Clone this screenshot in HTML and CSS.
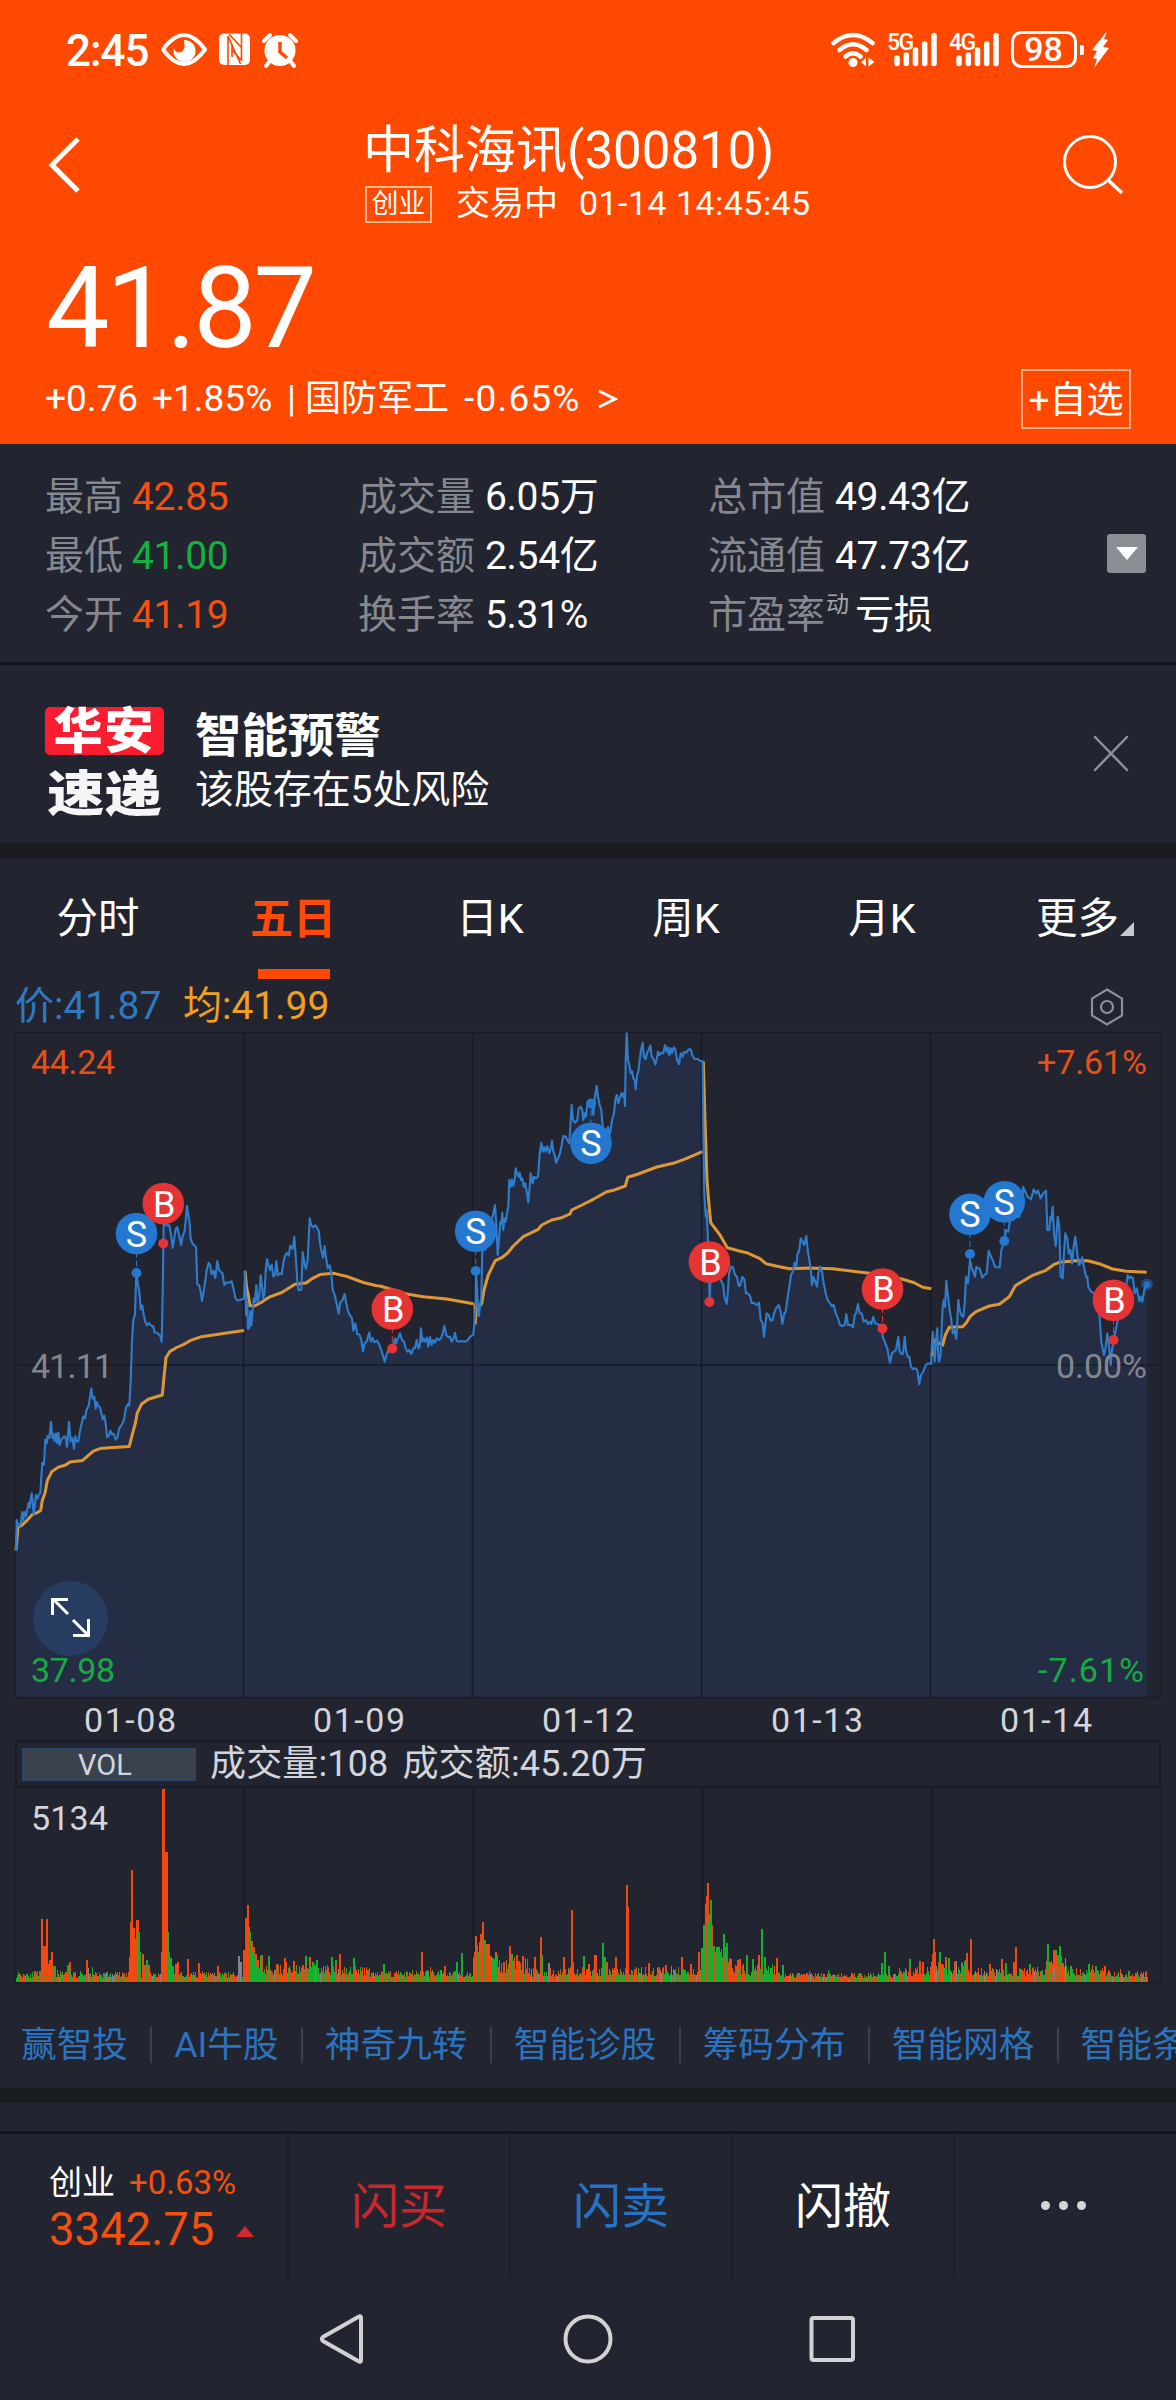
FILE: index.html
```html
<!DOCTYPE html>
<html lang="zh-CN">
<head>
<meta charset="utf-8">
<title>中科海讯(300810)</title>
<link rel="stylesheet" href="styles.css">
</head>
<body>
<div class="screen">
  <header class="top">
    <div class="status">
      <span class="clock">2:45</span>
      <svg class="status-left" width="140" height="38" viewBox="160 31 140 38">
        <path d="M163 49.500Q184 20.500 205 49.500Q184 78.500 163 49.500Z" fill="none" stroke="#fff" stroke-width="4" stroke-linejoin="round"/>
        <path d="M184 40a11 11 0 1 1-10 8q2 6 7 4t3-12z" fill="#fff"/>
        <rect x="219" y="33.500" width="31" height="31.500" rx="5" fill="#fff"/>
        <path d="M228 65V36L240.500 64M241.500 33V61M229 34L241 47M232 44V57M232 50L241 60" fill="none" stroke="#ff4800" stroke-width="1.600"/>
        <circle cx="280" cy="50.500" r="15.500" fill="#fff"/>
        <path d="M264 41l6-6M296 41l-6-6M269 62l-3 4M291 62l3 4" stroke="#fff" stroke-width="4" stroke-linecap="round"/>
        <path d="M280 42v10l7 6" fill="none" stroke="#ff4800" stroke-width="3.500"/>
      </svg>
      <svg class="status-right" width="282" height="40" viewBox="830 30 282 40">
        <g fill="none" stroke="#fff" stroke-width="4.500" stroke-linecap="round">
          <path d="M833.500 43Q853 27 872.500 43M839.500 50Q853 38.500 866.500 50M845.500 56.500Q853 50 860.500 56.500"/>
          <path d="M897 58v5.500M906.300 55v8.500M915.500 50v13.500M924.700 44v19.500M934 35.500v28M959 58v5.500M968.300 55v8.500M977.500 50v13.500M986.700 44v19.500M996 35.500v28" stroke-width="5.500"/>
        </g>
        <circle cx="853" cy="62.500" r="4.500" fill="#fff"/>
        <path d="M866 57.500v9l-5-4.500zM868.500 57.500l6 4.500-6 4.500z" fill="#fff"/>
        <text class="net" x="887" y="49.500">5G</text>
        <text class="net" x="949" y="49.500">4G</text>
        <rect x="1012.500" y="32.500" width="63" height="34" rx="9" fill="none" stroke="#fff" stroke-width="3"/>
        <text class="battery" x="1043.500" y="61">98</text>
        <path d="M1080 45h2.500q1.500 0 1.500 2v6q0 2-1.500 2h-2.500z" fill="#fff"/>
        <path d="M1107 31l-15 19 5 1-4 7 4 1-3 9 15-20-6-1 5-7-4-1z" fill="#fff"/>
      </svg>
    </div>
    <div class="titlebar">
      <svg class="back" width="34" height="60" viewBox="0 0 34 60"><path d="M32 4L6 30L32 56" fill="none" stroke="#fff" stroke-width="5"/></svg>
      <div class="title">
        <div class="name">中科海讯(300810)</div>
        <div class="session"><span class="board">创业</span><span class="state">交易中</span><span class="time">01-14 14:45:45</span></div>
      </div>
      <svg class="search" width="62" height="62" viewBox="0 0 62 62"><circle cx="28" cy="28" r="25.500" fill="none" stroke="#fff" stroke-width="3"/><path d="M46 46L60 59" stroke="#fff" stroke-width="3.500"/></svg>
    </div>
    <div class="price">41.87</div>
    <div class="change">
      <span class="c-abs">+0.76</span><span class="c-pct">+1.85%</span><span class="c-bar">|</span><span class="c-ind">国防军工</span><span class="c-ipct">-0.65%</span>
      <svg width="20" height="22" viewBox="0 0 20 22"><path d="M1 3L17 11L1 19" fill="none" stroke="#fff" stroke-width="3"/></svg>
      <span class="add">+自选</span>
    </div>
  </header>

  <section class="stats">
    <dl>
      <div><dt>最高</dt><dd class="up">42.85</dd></div>
      <div><dt>最低</dt><dd class="down">41.00</dd></div>
      <div><dt>今开</dt><dd class="up">41.19</dd></div>
    </dl>
    <dl>
      <div><dt>成交量</dt><dd>6.05万</dd></div>
      <div><dt>成交额</dt><dd>2.54亿</dd></div>
      <div><dt>换手率</dt><dd>5.31%</dd></div>
    </dl>
    <dl>
      <div><dt>总市值</dt><dd>49.43亿</dd></div>
      <div><dt>流通值</dt><dd>47.73亿</dd></div>
      <div><dt>市盈率<sup>动</sup></dt><dd>亏损</dd></div>
    </dl>
    <button class="expand"><svg width="22" height="13" viewBox="0 0 22 13"><path d="M0 0h22l-11 13z" fill="#fff"/></svg></button>
  </section>

  <section class="notice">
    <div class="logo"><span class="logo-a">华安</span><span class="logo-b">速递</span></div>
    <div class="notice-text"><strong>智能预警</strong><span>该股存在5处风险</span></div>
    <svg width="36" height="38" viewBox="0 0 36 38"><path d="M2 3L34 36M34 3L2 36" stroke="#8c9097" stroke-width="2.500" stroke-linecap="round"/></svg>
  </section>

  <nav class="tabs">
    <span>分时</span><span class="active">五日</span><span>日K</span><span>周K</span><span>月K</span><span class="more">更多<i></i></span>
  </nav>

  <div class="legend">
    <span class="l-price">价:41.87</span><span class="l-avg">均:41.99</span>
    <svg width="36" height="40" viewBox="0 0 36 40"><path d="M18 2.500L33 11.500V28.500L18 37.500L3 28.500V11.500Z" fill="none" stroke="#8c9097" stroke-width="2.200"/><circle cx="18" cy="20" r="6" fill="none" stroke="#8c9097" stroke-width="2.200"/></svg>
  </div>

  <svg class="chart" width="1176" height="710" viewBox="0 1030 1176 710">
    <path id="area" fill="#252d45"/>
    <g class="grid">
      <path d="M15.500 1697V1032.500H1160.500V1697M15 1365H1159M15 1697.500H1161"/>
      <path class="strong" d="M243.500 1032V1697M472.500 1032V1697M701.500 1032V1697M930.500 1032V1697"/>
    </g>
    <g id="average" fill="none" stroke="#dd9733" stroke-width="3" stroke-linejoin="round"></g>
    <path id="line" fill="none" stroke="#2f7ccb" stroke-width="2.100" stroke-linejoin="round"/>
    <circle cx="1147" cy="1284.500" r="6" fill="#2478d0" opacity=".4"/><circle cx="1147" cy="1284.500" r="3.500" fill="#2478d0" opacity=".8"/>
    <g id="markers"></g>
    <circle cx="70.500" cy="1618.500" r="37.500" fill="#263d61"/>
    <path d="M68 1614L53 1599M68 1599.500H52.500V1615M73 1620L88 1635M73 1635.500H88.500V1619" fill="none" stroke="#fff" stroke-width="3"/>
    <g class="axis">
      <text x="31" y="1074" class="t-up" textLength="84">44.24</text>
      <text x="31" y="1378" class="t-flat" textLength="82">41.11</text>
      <text x="31" y="1682" class="t-down" textLength="84">37.98</text>
      <text x="1037" y="1074" class="t-up" textLength="110">+7.61%</text>
      <text x="1056" y="1378" class="t-flat" textLength="91">0.00%</text>
      <text x="1038" y="1682" class="t-down" textLength="106">-7.61%</text>
      <text x="84" y="1732" textLength="92">01-08</text>
      <text x="313" y="1732" textLength="92">01-09</text>
      <text x="542" y="1732" textLength="92">01-12</text>
      <text x="771" y="1732" textLength="92">01-13</text>
      <text x="1000" y="1732" textLength="92">01-14</text>
    </g>
  </svg>

  <div class="vol-head"><span class="vol-name">VOL</span><span class="vol-text">成交量:108</span><span class="vol-text">成交额:45.20万</span></div>
  <svg class="volume" width="1176" height="196" viewBox="0 1788 1176 196">
    <g class="grid">
      <path d="M15.500 1788V1982.500H1160.500V1788"/>
      <path class="strong" d="M244.500 1788V1982M473.500 1788V1982M702.500 1788V1982M931.500 1788V1982"/>
    </g>
    <g id="bars" shape-rendering="crispEdges"></g>
    <g class="axis"><text x="31" y="1830" textLength="77">5134</text></g>
  </svg>

  <div class="links">
    <a>赢智投</a><a>AI牛股</a><a>神奇九转</a><a>智能诊股</a><a>筹码分布</a><a>智能网格</a><a>智能条件单</a>
  </div>

  <footer class="trade">
    <div class="index">
      <div class="index-top"><span>创业</span><span class="up">+0.63%</span></div>
      <div class="index-bottom"><span>3342.75</span><i></i></div>
    </div>
    <div class="buy">闪买</div><div class="sell">闪卖</div><div>闪撤</div>
    <div class="dots"><i></i><i></i><i></i></div>
  </footer>
  <div class="sysnav">
    <svg width="540" height="60" viewBox="318 2309 540 60" fill="none" stroke="#d2d2d2" stroke-width="4">
      <path d="M359 2316.500Q361 2315.500 361 2318V2360Q361 2362.500 359 2361.500L323 2341Q320.500 2339 323 2337Z"/>
      <circle cx="588" cy="2339" r="22.500"/>
      <rect x="811.500" y="2318" width="41.500" height="42" rx="2"/>
    </svg>
  </div>
</div>
<script src="chart.js"></script>
</body>
</html>
```
FILE: styles.css
```css
* { box-sizing: border-box; }
body { margin: 0; background: #22242f; }
.screen {
  width: 1176px; height: 2400px; overflow: hidden; color: #fff; background: #22242f;
  font-family: Roboto, "Noto Sans CJK SC", sans-serif; white-space: nowrap;
}
svg { display: block; flex: none; }
.up { color: #f4500f; }
.down { color: #13b13f; }

.top { height: 444px; background: #ff4800; }
.status { height: 100px; display: flex; align-items: center; padding: 0 64px 0 66px; }
.clock { width: 94px; font-size: 44px; font-weight: 500; letter-spacing: -1px; line-height: 50px; padding-top: 1px; }
.status-right { margin-left: auto; }
.net { font: 500 23px Roboto, sans-serif; fill: #fff; letter-spacing: -1.5px; }
.battery { font: 500 34px Roboto, sans-serif; fill: #fff; text-anchor: middle; }

.titlebar { height: 138px; display: flex; padding: 0 52px 0 46px; }
.back { margin-top: 35px; }
.title { margin-left: 283px; }
.name { height: 72px; margin-top: 13px; font-size: 51px; line-height: 76px; letter-spacing: 0; }
.session { display: flex; align-items: center; height: 36px; font-size: 34px; line-height: 36px; }
.board { width: 67px; height: 37px; margin: 3px 0 0 2px; border: 2px solid #ffbe8b; font-size: 27px; line-height: 33px; text-align: center; }
.state { margin-left: 24px; }
.time { margin-left: 21px; letter-spacing: .45px; }
.search { margin: 34px 0 0 auto; }
.price { height: 130px; padding-left: 46px; font-size: 113px; line-height: 141px; letter-spacing: -3.2px; }
.change { display: flex; align-items: center; height: 60px; margin-top: 1px; padding: 0 45px 0 45px; font-size: 37px; line-height: 60px; }
.c-abs { width: 107px; }
.c-pct { width: 135px; }
.c-bar { width: 18px; }
.c-ind { width: 157px; font-size: 36px; }
.c-ipct { width: 136px; padding-left: 2px; letter-spacing: 1.2px; }
.add { width: 110px; height: 60px; margin-left: auto; border: 2px solid #ffb184; text-align: center; line-height: 59px; font-size: 37px; }

.stats { display: flex; height: 221px; padding: 24px 30px 0 45px; border-bottom: 3px solid #12141d; font-size: 39px; }
.stats dl { margin: 0; width: 313px; }
.stats dl + dl { width: 350px; }
.stats dl + dl + dl { width: 399px; }
.stats dl > div { display: flex; height: 59px; line-height: 59px; }
.stats dt { color: #85888f; width: 87px; }
.stats dl + dl dt { width: 127px; }
.stats dd { margin: 0; letter-spacing: -.3px; }
.stats sup { font-size: 23px; line-height: 20px; vertical-align: 16px; color: #a5a7ad; margin-left: 1px; }
.stats dl:nth-child(3) div:nth-child(3) dt { width: 147px; }
.expand { width: 39px; height: 39px; margin-top: 66px; padding: 0; border: 0; border-radius: 3px; background: #8a8f93; display: flex; align-items: center; justify-content: center; }

.notice { display: flex; height: 193px; padding: 42px 47px 0 45px; border-bottom: 15px solid #1b1c20; }
.logo { display: flex; flex-direction: column; width: 150px; font-size: 49px; font-weight: 900; }
.logo-a { width: 119px; height: 48px; line-height: 49px; border-radius: 5px; background: #f91d2f; text-align: center; letter-spacing: 2px; }
.logo-b { width: 119px; margin-top: 14px; height: 48px; line-height: 50px; text-align: center; font-size: 53px; color: #f5f5f5; transform: scale(1.08, .93); }
.notice-text { display: flex; flex-direction: column; padding-top: 2px; font-size: 39px; line-height: 54px; letter-spacing: -.1px; }
.notice-text strong { font-size: 46.500px; }
.notice > svg { margin: 27px 0 0 auto; }

.tabs { display: grid; grid-template-columns: repeat(6, 196px); height: 120px; font-size: 41.500px; line-height: 122px; text-align: center; }
.tabs .active { color: #ff4a08; font-weight: 700; position: relative; font-size: 43px; padding-right: 2px; }
.tabs .active::after { content: ""; position: absolute; left: 62px; top: 111px; width: 72px; height: 10px; background: #ff4800; }
.tabs .more { display: flex; justify-content: center; align-items: center; gap: 1px; padding-left: 14px; }
.more i { border-left: 14px solid transparent; border-bottom: 14px solid #c7c8cc; margin-top: 20px; }

.legend { display: flex; align-items: center; height: 52px; padding: 4px 51px 0 15px; font-size: 39px; line-height: 52px; letter-spacing: 0; }
.l-price { width: 168px; color: #2f78c4; }
.l-avg { color: #f0a01e; }
.legend svg { margin: 1px 0 0 auto; }

.grid path { fill: none; stroke: #191c26; stroke-width: 1.500; }
.grid .strong { stroke: #171a27; }
.axis text { font: 34px Roboto, sans-serif; fill: #d3d5dc; }
.axis .t-up { fill: #e4511b; }
.axis .t-down { fill: #18a943; }
.axis .t-flat { fill: #83868f; }
.mark { font: 36px Roboto, sans-serif; fill: #fff; text-anchor: middle; }

.vol-head { display: flex; align-items: center; height: 48px; margin: 0 15px; padding-left: 5px; border: 2px solid #191c26; font-size: 36px; line-height: 45px; color: #d3d5dc; }
.vol-name { width: 174px; height: 33px; border: 1px solid #2b466f; background: #3a424e; text-align: center; font-size: 29px; line-height: 33px; padding-right: 8px; margin-right: 14px; }
.vol-text { margin-right: 14px; letter-spacing: .15px; }

.links { display: flex; height: 119px; padding: 17px 0 0 21px; align-items: center; border-bottom: 15px solid #1b1c20; font-size: 35.700px; color: #2b73bf; }
.links a { flex: none; padding-right: 22.200px; margin-right: 22px; border-right: 2px solid #3b404a; line-height: 36px; }

.trade { display: grid; grid-template-columns: 289px 222px 222px 222px 221px; height: 175px; padding-top: 28px; font-size: 48px; }
.trade > div { display: flex; align-items: center; justify-content: center; border-top: 3px solid #12141d; border-right: 2px solid #1a1c26; padding-bottom: 8px; }
.trade .dots { border-right: 0; gap: 9px; padding-bottom: 2px; padding-right: 5px; }
.dots i { width: 9px; height: 9px; border-radius: 50%; background: #d5d5d5; }
.trade .index { flex-direction: column; align-items: flex-start; padding: 0 0 0 49px; }
.index-top { display: flex; gap: 14px; font-size: 33px; line-height: 48px; }
.index-bottom { display: flex; align-items: center; font-size: 45.500px; line-height: 46px; color: #f4500f; }
.index-bottom i { margin: 3px 0 0 22px; border: 9px solid transparent; border-top: 0; border-bottom: 11px solid #d3272d; }
.buy { color: #c7272d; }
.sell { color: #2872c6; }
.sysnav { display: flex; height: 122px; padding: 31px 0 0 318px; }
```
FILE: chart.js
```js
// Chart samples are stored in thirds of a pixel; each block has its own x origin and y factor.
const blocks = [
  { x: 0, k: 3 / 2.8, d: "48,1485 50,1400 54,1412 58,1418 63,1405 67,1378 70,1400 74,1378 78,1390 82,1370 86,1352 89,1365 92,1340 95,1325 98,1350 101,1385 105,1355 108,1330 112,1340 117,1328 121,1325 124,1280 127,1240 132,1245 136,1175 140,1185 143,1165 148,1170 153,1125 157,1170 160,1158 164,1180 168,1158 172,1185 175,1155 179,1190 184,1175 188,1170 193,1165 197,1170 201,1195 207,1125 212,1180 217,1170 222,1200 226,1165 230,1180 235,1180 240,1150 246,1125 250,1110 255,1115 260,1090 266,1080 270,1055 274,1032 278,1060 283,1055 287,1088 290,1070 295,1080 300,1085 304,1100 308,1118 313,1108 317,1130 321,1168 326,1165 331,1150 336,1160 341,1158 347,1175 352,1170 357,1145 362,1138 368,1128 373,1115 378,1085 384,1075 388,1080 392,1010 396,900 400,840 405,825 409,710 414,740 418,760 422,810 427,800 431,825 436,845 441,855 447,848 453,855 460,858 464,875 470,875 476,880 481,885 485,902 488,760 491,570 500,575 508,575 513,600 518,638 523,610 527,585 532,580 537,600 543,630 548,605 554,590 557,560 561,520 565,545 569,570 572,615 579,628 588,635 592,740 597,742 602,760 606,787 611,760 615,735 620,700 626,680 630,685 635,712 641,702 646,722 652,675 657,700 662,705 667,708 673,742 680,735 688,735 695,732 701,755 706,778 712,785 720,784 732,780 735,703 737,760 738,825 742,790 744,865 748,862 751,815 754,855 758,810 761,780 765,790 769,742 773,790 778,770 782,715 786,745 790,780 794,760 797,700 801,670 805,685 810,700 815,685 820,718 825,715 829,675 834,715 839,710 845,712 850,680 855,660 860,652 866,660 871,632 878,640 883,607 887,660 892,730 896,757 904,755 908,650 913,680 918,697 923,670 929,555 934,575 940,580 946,575 952,583 956,590 960,625 965,650 969,665 974,633 978,665 983,695 989,687 994,710 998,755 1004,770 1009,790 1016,822 1021,790 1027,785 1034,767 1038,790 1044,815 1050,828 1056,835 1060,870 1066,850 1072,880 1078,880 1084,895 1089,928 1094,905 1100,900 1108,875 1112,900 1118,890 1123,903 1130,898 1137,907 1144,925 1149,940 1154,957 1159,940 1164,925 1170,930 1177,920" },
  { x: 1140, k: 1, d: "45,955 48,970 54,955 60,940 66,960 72,965 77,985 83,995 88,990 94,1002 100,985 105,985 110,960 115,985 119,980 123,925 127,965 131,955 136,965 141,953 145,980 150,950 155,975 160,960 165,968 171,955 177,960 183,955 188,940 193,918 199,945 205,952 210,950 215,965 221,955 225,938 230,962 237,965 245,963 253,965 260,963 267,955 273,948 280,945 283,910 287,860 288,760 291,800 293,850 297,888 301,850 304,830 307,690 315,690 325,660 332,600 338,590 345,555 349,610 353,705 358,650 361,605 364,610 367,578 370,630 373,595 377,605 381,580 385,560 388,480 392,500 396,478 400,498 404,480 407,445 412,462 416,470 419,458 423,480 427,475 431,500 436,490 440,515 445,547 449,500 452,460 458,490 462,470 468,475 474,470 479,400 484,368 488,395 492,380 497,395 502,378 508,400 512,385 516,362 520,395 524,405 528,428 534,415 540,400 545,375 550,348 557,350 562,360 568,370 571,320 575,255 579,300 585,308 592,300 596,265 602,260 607,270 610,300 614,280 618,290 621,260 625,250 631,248 637,260 640,285 644,235 650,197 654,230 659,255 664,270 668,320 672,330 680,340 684,320 688,345 692,330 696,300 702,280 706,240 710,225 715,250 719,235 724,220 729,230 732,218 735,258 737,120 740,40 744,120 748,135 752,160 757,155 760,175 764,180 767,208 771,165 775,155 779,120 783,90 788,68 792,112 797,118 801,100 806,90 811,76 815,110 820,115 826,133 830,118 834,95 838,105 844,98 850,100 855,75 860,95 864,82 868,105 872,85 876,100 881,82 886,88 891,120 897,132 902,100 908,110 912,95 919,98 926,88 932,88 937,105 944,117 952,117 960,122 968,124 970,320 973,520 977,590 980,570 985,690 989,845 992,760 1010,750 1027,790 1030,795 1033,830 1040,852 1044,810 1047,760 1053,740 1059,742 1065,765 1071,770 1076,798 1081,795 1087,770 1093,778 1098,820 1104,820 1111,830 1115,850 1122,848 1130,855 1137,848 1142,900 1148,910 1152,950 1157,905 1160,880 1166,885 1172,902 1178,900 1182,880" },
  { x: 2328, k: 1, d: "0,865 8,855 14,875 19,912 25,880 29,875 34,840 40,800 45,765 50,755 56,728 61,740 64,705 70,690 74,655 80,665 85,675 91,648 95,690 100,720 104,745 108,795 112,770 118,785 123,800 127,760 133,740 138,755 143,790 149,820 155,840 162,850 167,858 173,855 179,880 186,895 192,915 199,918 206,915 211,882 216,915 225,915 231,922 236,885 240,880 246,852 251,880 257,880 263,905 270,900 276,912 281,905 286,912 292,890 298,910 305,912 319,925 320,950 328,970 334,985 342,1028 348,1000 353,995 360,990 367,950 371,995 376,1002 381,1002 386,950 390,990 395,1010 400,1010 405,1040 411,1048 418,1045 424,1050 430,1093 435,1065 442,1055 449,1035 456,1030 466,1032 466,1000 470,935 473,980 476,1025 480,960 484,925 487,1010 490,1025 494,1000 497,920 500,860 503,840 507,860 511,783 516,830 521,870 526,900 530,940 535,930 541,957 544,900 547,840 551,870 556,885 562,890 566,850 570,770 576,790 582,720 587,745 592,755 597,770 601,740 605,745 611,745 619,773 625,765 632,760 638,692 643,705 650,720 657,740 664,742 671,742 676,690 684,665 690,630 697,635 702,600 710,600 718,590 730,590 738,560 741,500 748,515 755,530 765,538 773,508 780,520 786,512 794,535 802,520 810,512 814,630 820,630 823,590 826,600 830,560 834,640 839,678 845,590 850,620 854,770 860,775 864,700 868,640 874,655 878,700 883,690 888,730 893,680 898,650 904,700 909,735 914,730 919,712 924,740 930,770 934,770 937,800 945,815 955,820 970,880 976,965 984,1005 989,980 994,940 1000,985 1004,1035 1008,990 1013,960 1022,915 1030,880 1045,840 1055,765 1060,775 1065,770 1071,775 1076,820 1082,805 1090,843 1094,830 1099,845 1105,810 1112,793" }
];
const averages = [
  [{ x: 0, k: 3 / 2.8, d: "48,1485 54,1420 65,1415 80,1402 97,1385 110,1380 122,1373 127,1345 135,1325 142,1290 155,1265 175,1252 197,1246 210,1238 248,1233 262,1222 280,1207 300,1200 340,1197 388,1194 397,1160 406,1130 412,1100 425,1075 445,1062 487,1050 492,1000 498,945 510,928 530,917 550,909 570,898 600,888 640,882 680,876 732,869" }],
  [{ x: 0, k: 3 / 2.8, d: "735,703 740,750 745,770 750,800 765,800 785,790 810,775 845,763 885,740 918,736 935,725 960,713 1000,709 1040,718 1090,735 1130,744" }, { x: 1140, k: 1, d: "0,798 80,822 130,830 200,837 280,851" }],
  [{ x: 1140, k: 1, d: "285,850 286,910 290,850 298,860 305,850 312,810 325,765 346,722 365,713 383,699 400,678 430,650 475,628 485,615 515,600 545,593 570,582 575,570 600,558 640,538 680,515 700,511 736,498 743,472 775,462 830,441 880,430 920,415 967,395" }],
  [{ x: 1140, k: 1, d: "970,124 975,300 981,480 985,530 992,608 1020,645 1042,683 1075,692 1100,698 1140,716 1158,731" }, { x: 2328, k: 1, d: "0,738 40,746 100,744 170,746 230,754 300,762 380,778 415,788 440,802 466,806" }],
  [{ x: 2328, k: 1, d: "468,1008 475,960 480,965 500,975 508,945 520,922 560,920 570,910 582,890 600,875 640,858 670,853 700,830 718,797 770,766 810,751 835,733 850,727 900,722 935,722 975,733 1010,747 1050,754 1112,757" }]
];
const path = list => "M" + list.map(b => b.d.split(" ").map(p => {
  const [x, y] = p.split(",").map(Number);
  return ((x + b.x) / 3).toFixed(1) + " " + (1020 + y * b.k / 3).toFixed(1);
}).join("L")).join("L");
const byId = id => document.getElementById(id);

byId("line").setAttribute("d", path(blocks));
byId("area").setAttribute("d", path(blocks) + "L1147 1697H16Z");
byId("average").innerHTML = averages.map(a => `<path d="${path(a)}"/>`).join("");

// side, x, circle centre y, trade point y
const trades = [["S", 136.5, 1233.5, 1273], ["B", 163.3, 1203.5, 1243.5], ["B", 392.3, 1309, 1348.5], ["S", 475.7, 1231.3, 1271],
  ["S", 591, 1143.3, 1103.5], ["B", 709.4, 1262, 1302], ["B", 882.5, 1289, 1328.5], ["S", 970, 1214.3, 1254], ["S", 1004.3, 1201.7, 1241], ["B", 1113.5, 1300.3, 1340]];
byId("markers").innerHTML = trades.map(([s, x, y, p]) => {
  const c = s === "S" ? "#2478d0" : "#e63333";
  return `<path d="M${x} ${y}V${p}" stroke="${c}" stroke-dasharray="6 3"/><circle cx="${x}" cy="${p}" r="5" fill="${c}"/>` +
    `<circle cx="${x}" cy="${y}" r="20.800" fill="${c}"/><text class="mark" x="${x + (s === "S" ? 0 : 1)}" y="${y + 13}">${s}</text>`;
}).join("");

// Volume: peaks as x:height+colour (r rise, g fall, n flat) over a low background.
const peaks = "41:63r 43:36r 45:36r 46:63r 48:18r 49:22r 51:30r 53:16g 54:16g 57:12g 67:17g 69:20r 86:22r 88:14n 92:15g 129:25r 130:60r 131:112r 132:54r 133:54r 134:37r 135:43r 136:62r 137:62r 138:50g 139:30g 142:28r 144:17r 146:22g 148:17r 161:30r 162:193r 163:193r 164:108r 165:130r 166:130r 167:50g 168:30g 170:24g 172:16g 175:18r 177:20r 187:23r 198:19r 217:16r 238:26n 240:20n 243:32r 244:32r 245:64g 246:64r 247:77r 248:55r 249:50g 250:30g 251:41r 252:30g 253:35r 255:28r 257:22r 261:27r 268:26g 276:18r 284:24r 285:20r 293:21r 305:26g 309:25r 312:20g 316:22g 331:25g 335:22g 339:28r 353:24g 360:15g 383:18g 421:30r 430:15r 444:16r 456:20g 461:29g 473:25r 474:30r 475:46r 476:37r 477:30g 478:28g 479:40r 480:48r 481:38r 482:60r 483:42g 484:42g 485:38g 486:38r 487:30r 488:38r 490:26r 492:24g 495:30r 496:27g 503:20r 509:36r 511:28g 516:27r 522:26r 534:25r 540:45r 541:27g 548:19n 563:25r 571:72r 572:20r 583:26g 588:18r 594:27r 595:27r 602:39g 604:25g 606:20r 615:25r 626:97r 627:75r 636:15r 648:19r 657:14r 665:17r 681:25r 690:18r 698:30r 701:34g 702:34g 703:57g 704:57g 705:78g 706:86r 707:99r 708:60g 709:68g 710:82g 711:57r 712:32g 713:36g 714:30r 716:35g 718:35g 720:30g 722:25g 723:48g 725:35r 726:39g 728:20r 730:23r 737:22r 739:23r 746:27g 752:23g 758:27r 761:53g 764:25g 776:24r 782:17g 809:11g 828:12g 881:19g 884:30g 888:16g 899:14r 909:23g 919:21r 922:20r 931:20g 932:28r 933:43r 934:30r 939:30g 945:25r 948:24g 954:20r 965:22r 966:29r 970:43r 971:12r 989:18r 1001:23r 1005:19g 1013:20r 1015:35r 1029:18g 1047:38g 1049:20r 1053:32r 1055:32g 1057:27g 1059:36g 1062:19r 1070:16g 1088:18g 1095:16g 1104:16r 1120:13r";
const peak = {};
peaks.split(" ").forEach(p => { const m = p.match(/(\d+):(\d+)(\w)/); peak[m[1]] = [+m[2], m[3]]; });
let seed = 11;
const rnd = () => (seed = (seed * 16807) % 2147483647) / 2147483647;
const level = x => x < 60 ? 8 : x < 245 ? 7.5 : x < 262 ? 22 : x < 370 ? 14 : x < 473 ? 9 : x < 530 ? 20 : x < 640 ? 11 : x < 702 ? 12 :
  x < 730 ? 28 : x < 775 ? 14 : x < 900 ? 6.5 : x < 932 ? 12 : x < 965 ? 17 : x < 1045 ? 11 : x < 1066 ? 22 : x < 1110 ? 13 : 8;
const shade = { r: "#f04a12", g: "#17ad2e", n: "#85868c", m: "#8c7b1c" };
let bars = "";
for (let x = 16; x < 1148; x++) {
  const q = rnd(), t = rnd();
  const [h, c] = peak[x] || [2 + level(x) * (0.3 + q * 0.85), t < .4 ? "r" : t < .72 ? "g" : t < .94 ? "m" : "n"];
  bars += `<rect x="${x}" y="${(1982 - h).toFixed(0)}" width="${peak[x] && h > 15 ? 2 : 1}" height="${h.toFixed(0)}" fill="${shade[c]}"/>`;
}
byId("bars").innerHTML = bars;
```
